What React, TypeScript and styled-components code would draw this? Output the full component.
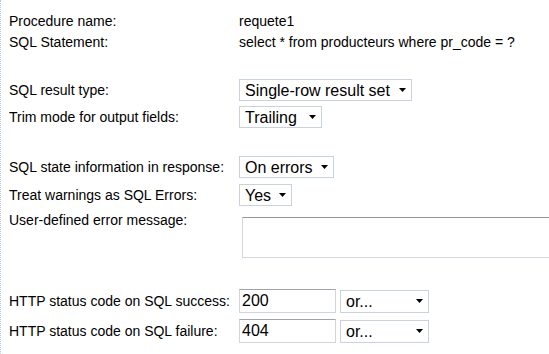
import React from 'react';
import styled, {createGlobalStyle} from 'styled-components';

const GlobalStyle = createGlobalStyle`
  html, body {
    margin: 0;
    padding: 0;
    background: #fff;
  }
  body {
    font-family: 'Liberation Sans', Arial, sans-serif;
    color: #000;
  }
`;

const Page = styled.div`
  box-sizing: border-box;
  width: 549px;
  height: 354px;
  overflow: hidden;
  border-left: 1px dotted #b3c6e4;
  padding: 11px 0 0 8px;
`;

const Section = styled.div<{top: number; gap: number}>`
  display: grid;
  grid-template-columns: 230px auto;
  row-gap: ${({gap}) => gap}px;
  margin-top: ${({top}) => top}px;
  align-items: center;
`;

const Label = styled.div<{lh: number; alignTop?: boolean}>`
  font-size: 14px;
  line-height: ${({lh}) => lh}px;
  white-space: nowrap;
  align-self: ${({alignTop}) => (alignTop ? 'start' : 'center')};
`;

const Value = styled.div`
  font-size: 14px;
  line-height: 21px;
  white-space: nowrap;
`;

const Cell = styled.div`
  display: flex;
  align-items: center;
  gap: 4px;
`;

const SelectWrap = styled.span<{w: number}>`
  position: relative;
  display: inline-block;
  width: ${({w}) => w}px;
`;

const Select = styled.select<{h: number}>`
  appearance: none;
  -webkit-appearance: none;
  box-sizing: border-box;
  width: 100%;
  height: ${({h}) => h}px;
  margin: 0;
  padding: 0 0 0 5px;
  border: 1px solid #c9d1dc;
  border-radius: 0;
  background: #fff;
  font-family: 'Liberation Sans', Arial, sans-serif;
  font-size: 16px;
  color: #000;
  outline: none;
`;

const Arrow = styled.svg`
  position: absolute;
  right: 6px;
  top: 50%;
  margin-top: -2px;
  pointer-events: none;
`;

const TextArea = styled.textarea`
  box-sizing: border-box;
  width: 330px;
  height: 41px;
  margin: 5px 0 0 3px;
  padding: 2px;
  border: 1px solid #d3d6de;
  border-top-color: #8f9b8f;
  resize: none;
  font-family: 'Liberation Sans', Arial, sans-serif;
  font-size: 14px;
  display: block;
`;

const CodeInput = styled.input`
  box-sizing: border-box;
  width: 97px;
  height: 24px;
  margin: 0;
  padding: 0 0 0 2px;
  border: 1px solid #d2d6dc;
  border-top-color: #9ea4a8;
  font-family: 'Liberation Sans', Arial, sans-serif;
  font-size: 16px;
  color: #000;
  outline: none;
`;

type DropProps = {value: string; width: number; height?: number; options: string[]};

const Dropdown = ({value, width, height = 22, options}: DropProps) => (
  <SelectWrap w={width}>
    <Select h={height} defaultValue={value}>
      {options.map((o) => (
        <option key={o}>{o}</option>
      ))}
    </Select>
    <Arrow width='7' height='4' viewBox='0 0 7 4'>
      <path d='M0 0h7L3.5 4z' fill='#000' />
    </Arrow>
  </SelectWrap>
);

export default () => {
  return (
    <Page>
      <GlobalStyle />
      <Section top={0} gap={0}>
        <Label lh={21}>Procedure name:</Label>
        <Value>requete1</Value>
        <Label lh={21}>SQL Statement:</Label>
        <Value>select * from producteurs where pr_code = ?</Value>
      </Section>

      <Section top={26} gap={5}>
        <Label lh={22}>SQL result type:</Label>
        <Cell>
          <Dropdown
            value='Single-row result set'
            width={173}
            options={['Single-row result set', 'Multi-row result set', 'No result set']}
          />
        </Cell>
        <Label lh={22}>Trim mode for output fields:</Label>
        <Cell>
          <Dropdown value='Trailing' width={83} options={['None', 'Leading', 'Trailing', 'Both']} />
        </Cell>
      </Section>

      <Section top={28} gap={6}>
        <Label lh={22}>SQL state information in response:</Label>
        <Cell>
          <Dropdown value='On errors' width={95} options={['Never', 'On errors', 'Always']} />
        </Cell>
        <Label lh={22}>Treat warnings as SQL Errors:</Label>
        <Cell>
          <Dropdown value='Yes' width={53} options={['Yes', 'No']} />
        </Cell>
        <Label lh={16} alignTop>
          User-defined error message:
        </Label>
        <Cell>
          <TextArea />
        </Cell>
      </Section>

      <Section top={31} gap={6}>
        <Label lh={24}>HTTP status code on SQL success:</Label>
        <Cell>
          <CodeInput defaultValue='200' />
          <Dropdown value='or...' width={89} height={23} options={['or...', '201', '204']} />
        </Cell>
        <Label lh={24}>HTTP status code on SQL failure:</Label>
        <Cell>
          <CodeInput defaultValue='404' />
          <Dropdown value='or...' width={89} height={23} options={['or...', '400', '500']} />
        </Cell>
      </Section>
    </Page>
  );
};
